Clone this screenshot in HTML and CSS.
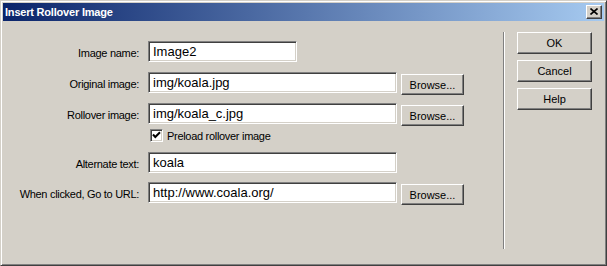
FILE: index.html
```html
<!DOCTYPE html>
<html>
<head>
<meta charset="utf-8">
<link rel="stylesheet" href="styles.css">
</head>
<body>
<div class="window">
  <div class="titlebar">
    <span class="title">Insert Rollover Image</span>
    <span class="close"><svg width="8" height="7" viewBox="0 0 8 7"><path d="M0.5 0.5 L7.5 6.5 M7.5 0.5 L0.5 6.5" stroke="#000" stroke-width="1.6" fill="none"/></svg></span>
  </div>
  <div class="content">
    <div class="form">
      <label class="lbl">Image name:</label>
      <div class="cell"><div class="field short">Image2</div></div>
      <div></div>

      <label class="lbl">Original image:</label>
      <div class="cell"><div class="field">img/koala.jpg</div></div>
      <div class="bcell"><div class="btn browse">Browse...</div></div>

      <label class="lbl">Rollover image:</label>
      <div class="cell"><div class="field">img/koala_c.jpg</div></div>
      <div class="bcell"><div class="btn browse">Browse...</div></div>

      <div></div>
      <div class="cell check-row">
        <span class="checkbox"><svg width="9" height="9" viewBox="0 0 9 9"><path d="M1 3.5 L3.3 6 L8 1.2" stroke="#000" stroke-width="2" fill="none"/></svg></span>
        <span class="check-label">Preload rollover image</span>
      </div>
      <div></div>

      <label class="lbl">Alternate text:</label>
      <div class="cell"><div class="field">koala</div></div>
      <div></div>

      <label class="lbl">When clicked, Go to URL:</label>
      <div class="cell"><div class="field">http://www.coala.org/</div></div>
      <div class="bcell"><div class="btn browse">Browse...</div></div>
    </div>
    <div class="separator"></div>
    <div class="actions">
      <div class="btn action">OK</div>
      <div class="btn action">Cancel</div>
      <div class="btn action">Help</div>
    </div>
  </div>
</div>
</body>
</html>
```

FILE: styles.css
```css
html, body {
  margin: 0;
  padding: 0;
  background: #d4d0c8;
}
.window {
  width: 607px;
  height: 266px;
  box-sizing: border-box;
  background: #d4d0c8;
  border-top: 1px solid #d4d0c8;
  border-left: 1px solid #d4d0c8;
  border-right: 1px solid #404040;
  border-bottom: 1px solid #404040;
  box-shadow: inset 1px 1px 0 #ffffff, inset -1px -1px 0 #808080;
  padding: 2px;
  font-family: "Liberation Sans", Arial, sans-serif;
  color: #000;
}
.titlebar {
  height: 18px;
  background: linear-gradient(to right, #0a246a, #a6caf0);
  display: flex;
  align-items: center;
  justify-content: space-between;
  padding: 0 2px 0 2px;
}
.title {
  color: #fff;
  font-weight: bold;
  font-size: 11px;
  letter-spacing: -0.2px;
}
.close {
  width: 16px;
  height: 14px;
  box-sizing: border-box;
  background: #d4d0c8;
  border-top: 1px solid #fff;
  border-left: 1px solid #fff;
  border-right: 1px solid #404040;
  border-bottom: 1px solid #404040;
  box-shadow: inset -1px -1px 0 #808080;
  display: flex;
  align-items: center;
  justify-content: center;
}
.close svg { display: block; margin-left: -1px; margin-top: -1px; }
.content {
  display: flex;
  height: 243px;
}
.form {
  width: 500px;
  margin-top: 20px;
  display: grid;
  grid-template-columns: 136px 262px 63px;
  grid-template-rows: 31px 31px 26px 23px 30px 22px;
  align-content: start;
}
.lbl {
  font-size: 11px;
  letter-spacing: -0.3px;
  text-align: right;
  padding-top: 6px;
  line-height: 13px;
}
.cell {
  padding-left: 9px;
}
.field {
  width: 249px;
  height: 21px;
  box-sizing: border-box;
  background: #fff;
  border-top: 1px solid #808080;
  border-left: 1px solid #808080;
  border-right: 1px solid #fff;
  border-bottom: 1px solid #fff;
  box-shadow: inset 1px 1px 0 #404040, inset -1px -1px 0 #d4d0c8;
  font-size: 13px;
  line-height: 17px;
  padding: 1px 4px 0 4px;
  white-space: nowrap;
}
.field.short { width: 149px; }
.bcell { padding-top: 2px; }
.btn {
  box-sizing: border-box;
  background: #d4d0c8;
  border-top: 1px solid #fff;
  border-left: 1px solid #fff;
  border-right: 1px solid #404040;
  border-bottom: 1px solid #404040;
  box-shadow: inset -1px -1px 0 #808080;
  font-size: 11px;
  display: flex;
  align-items: center;
  justify-content: center;
}
.browse {
  width: 63px;
  height: 21px;
}
.check-row {
  display: flex;
  align-items: center;
  padding-left: 11px;
  height: 13px;
}
.checkbox {
  width: 13px;
  height: 13px;
  box-sizing: border-box;
  background: #fff;
  border-top: 1px solid #808080;
  border-left: 1px solid #808080;
  border-right: 1px solid #fff;
  border-bottom: 1px solid #fff;
  box-shadow: inset 1px 1px 0 #404040, inset -1px -1px 0 #d4d0c8;
  display: flex;
  align-items: center;
  justify-content: center;
}
.checkbox svg { display: block; }
.check-label {
  font-size: 11px;
  letter-spacing: -0.3px;
  margin-left: 4px;
}
.separator {
  width: 1px;
  border-right: 1px solid #fff;
  background: #808080;
  margin-top: 11px;
  height: 217px;
}
.actions {
  margin-left: 12px;
  margin-top: 11px;
  display: flex;
  flex-direction: column;
  gap: 6px;
}
.action {
  width: 75px;
  height: 22px;
}
```
